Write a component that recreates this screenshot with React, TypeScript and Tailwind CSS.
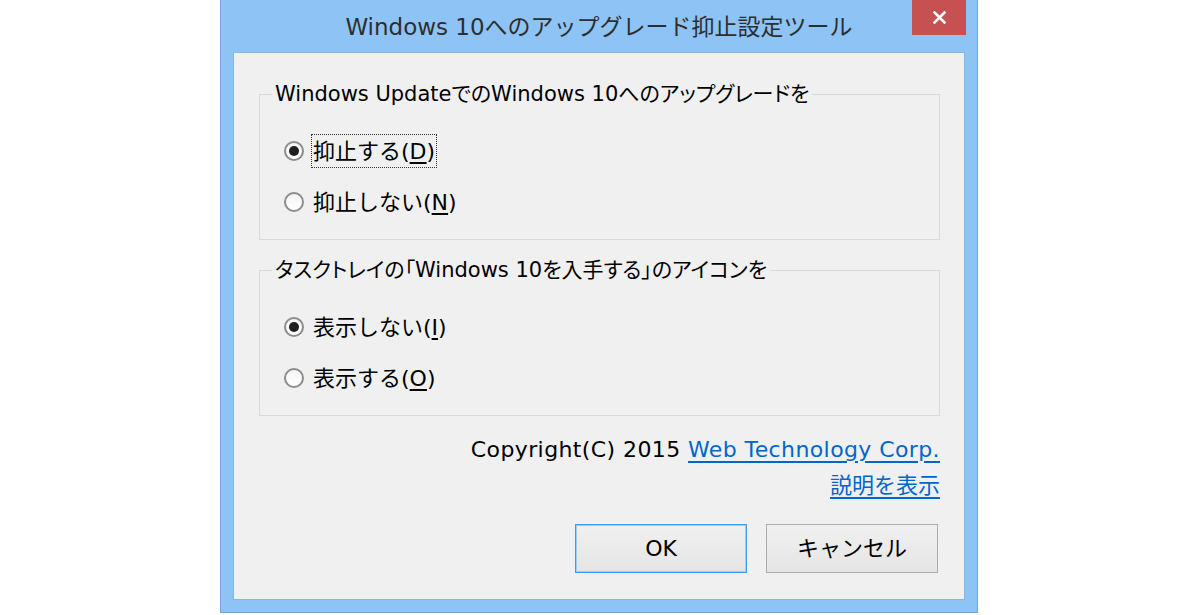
import React from "react";

function Radio({ checked }: { checked?: boolean }) {
  return (
    <span className="w-[20px] h-[20px] rounded-full border-2 border-[#8c8c8c] bg-gradient-to-b from-[#f4f4f4] to-white flex items-center justify-center shrink-0">
      {checked && <span className="w-[10px] h-[10px] rounded-full bg-[#1e1e1e]" />}
    </span>
  );
}

function Option({
  label,
  mnemonic,
  checked,
  focused,
}: {
  label: string;
  mnemonic: string;
  checked?: boolean;
  focused?: boolean;
}) {
  return (
    <div className="flex items-center h-[34px] gap-[7px]">
      <Radio checked={checked} />
      <span
        className={
          "h-[34px] flex items-center px-[1px] border " +
          (focused ? "border-dotted border-[#333]" : "border-transparent")
        }
      >
        {label}(<span className="underline underline-offset-[3px]">{mnemonic}</span>)
      </span>
    </div>
  );
}

function Group({ title, children }: { title: string; children: React.ReactNode }) {
  return (
    <fieldset className="border border-[#d9d9d9] px-0">
      <legend className="ml-[12px] px-[3px] text-[21px] leading-[30px] [font-feature-settings:'palt']">{title}</legend>
      <div className="pt-[25px] pb-[20px] pl-[24px] flex flex-col gap-[17px]">{children}</div>
    </fieldset>
  );
}

export default function App() {
  return (
    <div className="w-[1200px] h-[615px] bg-white overflow-hidden font-['DejaVu_Sans','Noto_Sans_CJK_JP',sans-serif] text-[22px] text-black">
      <div className="ml-[220px] w-[758px] h-[613px] bg-[#8dc4f5] border border-t-0 border-[#72a6d8] flex flex-col">
        {/* title bar */}
        <div className="relative h-[52px] shrink-0 flex items-center justify-center pt-[3px]">
          <span className="text-[23px] text-[#2e2e2e]">Windows 10へのアップグレード抑止設定ツール</span>
          <div className="absolute right-[11px] top-0 w-[54px] h-[35px] bg-[#c75050] flex items-center justify-center">
            <svg width="13" height="13" viewBox="0 0 13 13">
              <path d="M1.5 1.5 L11.5 11.5 M11.5 1.5 L1.5 11.5" stroke="white" strokeWidth="2.6" strokeLinecap="square" />
            </svg>
          </div>
        </div>

        {/* client area */}
        <div className="mx-[12px] h-[548px] bg-[#f0f0f0] border border-[#86b6e3] pl-[25px] pr-[24px] pt-[26px] flex flex-col">
          <Group title="Windows UpdateでのWindows 10へのアップグレードを">
            <Option label="抑止する" mnemonic="D" checked focused />
            <Option label="抑止しない" mnemonic="N" />
          </Group>
          <div className="mt-[15px]">
            <Group title="タスクトレイの「Windows 10を入手する」のアイコンを">
              <Option label="表示しない" mnemonic="I" checked />
              <Option label="表示する" mnemonic="O" />
            </Group>
          </div>

          <div className="mt-[16px] text-right leading-[36px]">
            <div className="tracking-[0.4px]">
              Copyright(C) 2015{" "}
              <a href="#" className="text-[#0066cc] underline underline-offset-[4px]">
                Web Technology Corp.
              </a>
            </div>
            <div>
              <a href="#" className="text-[#0066cc] underline underline-offset-[4px]">
                説明を表示
              </a>
            </div>
          </div>

          <div className="mt-[20px] pr-[2px] flex justify-end gap-[19px]">
            <button className="w-[172px] h-[49px] border border-[#3c9cf0] shadow-[inset_0_0_0_1px_#9ccdf7] bg-gradient-to-b from-[#f0f0f0] to-[#e5e5e5] flex items-center justify-center">
              OK
            </button>
            <button className="w-[172px] h-[49px] border border-[#adadad] bg-gradient-to-b from-[#f0f0f0] to-[#e5e5e5] flex items-center justify-center">
              キャンセル
            </button>
          </div>
        </div>
      </div>
    </div>
  );
}
